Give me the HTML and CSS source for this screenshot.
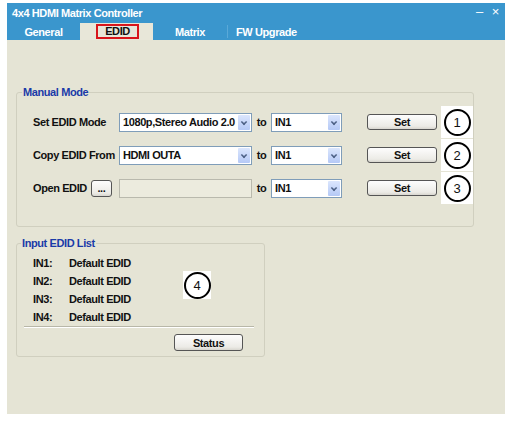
FILE: index.html
```html
<!DOCTYPE html>
<html>
<head>
  <link rel="stylesheet" href="styles.css">
</head>
<body>
  <div class="window">
    <!-- title bar -->
    <div class="titlebar">
      <span class="title">4x4 HDMI Matrix Controller</span>
      <span class="win-btns"><span class="min">–</span><span class="close">×</span></span>
    </div>

    <!-- tab strip -->
    <div class="tabs">
      <div class="tab">General</div>
      <div class="tab active"><span class="mark">EDID</span></div>
      <div class="tab">Matrix</div>
      <div class="tab sep">FW Upgrade</div>
    </div>

    <div class="content">
      <fieldset class="group manual">
        <legend>Manual Mode</legend>

        <div class="row">
          <span class="lbl">Set EDID Mode</span>
          <div class="combo wide"><span class="val">1080p,Stereo Audio 2.0</span><span class="arrow"></span></div>
          <span class="to">to</span>
          <div class="combo narrow"><span class="val">IN1</span><span class="arrow"></span></div>
          <button class="btn set">Set</button>
          <span class="num">1</span>
        </div>

        <div class="row">
          <span class="lbl">Copy EDID From</span>
          <div class="combo wide"><span class="val">HDMI OUTA</span><span class="arrow"></span></div>
          <span class="to">to</span>
          <div class="combo narrow"><span class="val">IN1</span><span class="arrow"></span></div>
          <button class="btn set">Set</button>
          <span class="num">2</span>
        </div>

        <div class="row">
          <span class="lbl">Open EDID <button class="btn dots">...</button></span>
          <div class="field wide"></div>
          <span class="to">to</span>
          <div class="combo narrow"><span class="val">IN1</span><span class="arrow"></span></div>
          <button class="btn set">Set</button>
          <span class="num">3</span>
        </div>
      </fieldset>

      <fieldset class="group inputs">
        <legend>Input EDID List</legend>
        <div class="list">
          <span>IN1:</span><span>Default EDID</span>
          <span>IN2:</span><span>Default EDID</span>
          <span>IN3:</span><span>Default EDID</span>
          <span>IN4:</span><span>Default EDID</span>
        </div>
        <span class="num four">4</span>
        <div class="rule"></div>
        <div class="status-row"><button class="btn status">Status</button></div>
      </fieldset>
    </div>
  </div>
</body>
</html>
```

FILE: styles.css
```css
body {
  margin: 0;
  background: #fff;
  font-family: "Liberation Sans", Arial, sans-serif;
  font-weight: bold;
  font-size: 11px;
  letter-spacing: -0.4px;
  color: #111;
}

.window {
  margin: 3px 4px 0 7px;
  width: 498px;
  display: flex;
  flex-direction: column;
}

/* blue caption */
.titlebar {
  height: 19px;
  background: #3a96cd;
  color: #fff;
  display: flex;
  align-items: center;
  justify-content: space-between;
  padding: 0 6px 0 5px;
}

.win-btns {
  display: flex;
  gap: 9px;
  font-size: 13px;
  font-weight: normal;
  margin-top: -3px;
}

/* tabs */
.tabs {
  height: 18px;
  background: #3a96cd;
  display: flex;
  align-items: flex-end;
}

.tab {
  color: #fff;
  height: 17px;
  display: flex;
  align-items: center;
  justify-content: center;
}

.tab:nth-child(1) { width: 73px; }
.tab:nth-child(2) { width: 73px; }
.tab:nth-child(3) { width: 74px; }

.tab.active {
  background: #e8e7d9;
  color: #111;
}

.tab .mark {
  border: 2px solid #d8151b;
  padding: 0 7px;
  line-height: 11px;
  height: 11px;
  margin-left: 2px;
}

.tab.sep {
  border-left: 1px solid #5aa9d8;
  height: 13px;
  padding-left: 8px;
  margin-bottom: 2px;
}

.content {
  height: 374px;
  background: #e5e4d5;
  padding: 0 0 0 9px;
  display: flex;
  flex-direction: column;
  align-items: flex-start;
}

/* group boxes */
.group {
  border: 1px solid #d0cfbf;
  border-radius: 3px;
  margin: 0;
  position: relative;
}

.group legend {
  color: #1a3aa8;
  padding: 0 1px;
  font-size: 11px;
}

.manual {
  margin-top: 46px;
  width: 446px;
  box-sizing: border-box;
  padding: 14px 0 28px 16px;
  display: flex;
  flex-direction: column;
  gap: 13px;
}

.manual legend { margin-left: -11px; }

.row {
  display: flex;
  align-items: center;
  height: 20px;
}

.lbl {
  width: 86px;
  display: flex;
  align-items: center;
  gap: 4px;
  white-space: nowrap;
}

.combo, .field {
  height: 17px;
  border: 1px solid #7f9db9;
  background: #fff;
  display: flex;
  align-items: center;
  box-sizing: content-box;
}

.field {
  background: #ecebde;
  border-color: #b9b9ad;
}

.wide { width: 131px; }
.narrow { width: 69px; }

.combo .val {
  flex: 1;
  padding-left: 3px;
  white-space: nowrap;
  overflow: hidden;
}

/* xp-ish drop arrow */
.combo .arrow {
  width: 12px;
  height: 15px;
  margin-right: 1px;
  background: linear-gradient(#dbe6fd, #b5c9f6);
  border-radius: 1px;
  position: relative;
}

.combo .arrow::after {
  content: "";
  position: absolute;
  left: 3px;
  top: 4px;
  width: 4px;
  height: 4px;
  border-right: 2px solid #4d6185;
  border-bottom: 2px solid #4d6185;
  transform: rotate(45deg) scale(0.75);
}

.to {
  width: 19px;
  text-align: center;
}

.btn {
  font: inherit;
  letter-spacing: inherit;
  color: #111;
  border: 1px solid #555;
  border-radius: 3px;
  background: linear-gradient(#fdfdfd, #ecebe6 80%, #d8d6cf);
  padding: 0;
}

.btn.set {
  width: 70px;
  height: 16px;
  margin-left: 25px;
}

.btn.dots {
  width: 21px;
  height: 17px;
  line-height: 10px;
}

/* circled callout numbers */
.num {
  width: 32px;
  height: 32px;
  background: #fff;
  display: flex;
  align-items: center;
  justify-content: center;
  margin-left: 4px;
  position: relative;
  font-size: 13px;
  font-weight: normal;
}

.num::before {
  content: "";
  position: absolute;
  width: 23px;
  height: 23px;
  border: 2px solid #000;
  border-radius: 50%;
}

.inputs {
  margin-top: 10px;
  width: 249px;
  box-sizing: border-box;
  padding: 7px 7px 5px 7px;
}

.inputs legend { margin-left: -3px; }

.list {
  display: grid;
  grid-template-columns: 36px auto;
  row-gap: 4px;
  padding-left: 9px;
  line-height: 14px;
}

.num.four {
  position: absolute;
  left: 166px;
  top: 22px;
  width: 28px;
  height: 28px;
  margin: 0;
}

.rule {
  border-top: 1px solid #b8b7a8;
  border-bottom: 1px solid #fff;
  margin: 2px 3px 0 0;
}

.status-row {
  display: flex;
  justify-content: flex-end;
  padding: 6px 14px 0 0;
}

.btn.status {
  width: 69px;
  height: 17px;
}
```
